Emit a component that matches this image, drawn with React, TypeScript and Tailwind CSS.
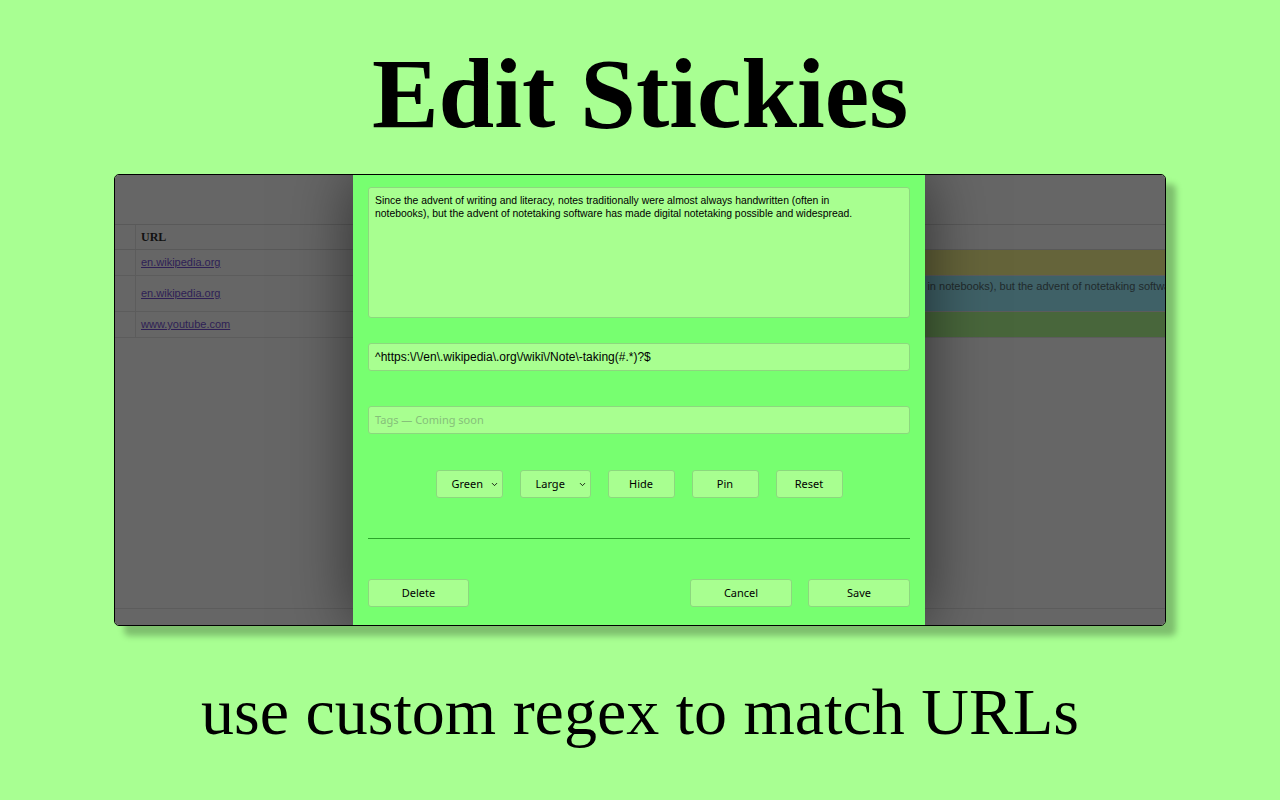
import { ChevronDown } from "lucide-react";

const NOTE =
  "Since the advent of writing and literacy, notes traditionally were almost always handwritten (often in notebooks), but the advent of notetaking software has made digital notetaking possible and widespread.";

const serif = "font-['Liberation_Serif',_'Times_New_Roman',_serif]";
const ui = "font-['Noto_Sans',_'Open_Sans',_sans-serif]";
const arial = "font-['Liberation_Sans',_Arial,_sans-serif]";

function Btn({ label, w = "w-[67px]" }: { label: string; w?: string }) {
  return (
    <button
      type="button"
      className={`${w} h-[28px] rounded-[3px] border border-[#8cd87e] bg-[#a8ff90] text-[11px] text-black ${ui}`}
    >
      {label}
    </button>
  );
}

function Sel({ label, w }: { label: string; w: string }) {
  return (
    <div
      className={`${w} flex h-[28px] items-center justify-between rounded-[3px] border border-[#8cd87e] bg-[#a8ff90] pl-[15px] pr-[3px] text-[11px] text-black ${ui}`}
    >
      <span>{label}</span>
      <ChevronDown className="size-[9px]" strokeWidth={2.25} />
    </div>
  );
}

function EditDialog() {
  return (
    <div className="absolute top-0 bottom-0 left-[238px] flex w-[572px] flex-col bg-[#77ff70] px-[15px] pt-[12px] shadow-[0_0_60px_rgba(0,0,0,0.55)]">
      <div
        className={`h-[131px] rounded-[3px] border border-[#8cd87e] bg-[#a8ff90] py-[6px] pr-[26px] pl-[6px] text-[10.4px] leading-[13px] text-black ${arial}`}
      >
        {NOTE}
      </div>

      <div
        className={`mt-[25px] flex h-[28px] items-center rounded-[3px] border border-[#8cd87e] bg-[#a8ff90] px-[6px] text-[12px] text-black ${arial}`}
      >
        {"^https:\\/\\/en\\.wikipedia\\.org\\/wiki\\/Note\\-taking(#.*)?$"}
      </div>

      <div
        className={`mt-[35px] flex h-[28px] items-center rounded-[3px] border border-[#8cd87e] bg-[#a8ff90] px-[6px] text-[11px] text-[#86c07a] ${ui}`}
      >
        Tags — Coming soon
      </div>

      <div className="mt-[36px] flex justify-center gap-[17px]">
        <Sel label="Green" w="w-[67px]" />
        <Sel label="Large" w="w-[71px]" />
        <Btn label="Hide" />
        <Btn label="Pin" />
        <Btn label="Reset" />
      </div>

      <div className="mt-[40px] h-px bg-[#2aa52a]" />

      <div className="mt-[40px] flex items-center">
        <Btn label="Delete" w="w-[101px]" />
        <div className="flex-1" />
        <Btn label="Cancel" w="w-[102px]" />
        <div className="w-[16px]" />
        <Btn label="Save" w="w-[102px]" />
      </div>
    </div>
  );
}

function BackgroundTable() {
  const rows = [
    { url: "en.wikipedia.org", h: "h-[26px]", cell: "bg-[#65643a]", text: "" },
    { url: "en.wikipedia.org", h: "h-[36px]", cell: "bg-[#3f6167]", text: NOTE },
    { url: "www.youtube.com", h: "h-[26px]", cell: "bg-[#48663b]", text: "" },
  ];
  return (
    <div className="flex h-full flex-col bg-[#666666]">
      <div className="h-[50px] border-b border-[#595959]" />
      <div className="grid h-[25px] grid-cols-[21px_326px_1fr] border-b border-[#595959]">
        <div className="border-r border-[#5c5c5c]" />
        <div className={`flex items-center px-[5px] text-[12px] font-bold text-[#111] ${serif}`}>URL</div>
        <div />
      </div>
      {rows.map((r, i) => (
        <div key={i} className={`grid ${r.h} grid-cols-[21px_325px_1fr] border-b border-[#5c5c5c]`}>
          <div className="border-r border-[#5c5c5c]" />
          <div className={`flex items-center px-[5px] text-[11px] ${arial}`}>
            <span className="text-[#2e1f55] underline">{r.url}</span>
          </div>
          <div
            className={`${r.cell} overflow-hidden pt-[4px] text-[11px] leading-[13px] text-[#1f2a2c] ${arial}`}
          >
            <div className="-ml-[6px] w-[1100px]">{r.text}</div>
          </div>
        </div>
      ))}
      <div className="flex-1 border-b border-[#5c5c5c]" />
      <div className="h-[16px]" />
    </div>
  );
}

export default function App() {
  return (
    <div className="flex h-[800px] w-[1280px] flex-col items-center overflow-hidden bg-[#a8ff92]">
      <h1 className={`mt-[39px] h-[110px] text-[100px] leading-[110px] font-bold text-black ${serif}`}>
        Edit Stickies
      </h1>

      <div className="relative mt-[25px] h-[452px] w-[1052px] overflow-hidden rounded-[5px] border border-black shadow-[10px_10px_6px_rgba(0,0,0,0.25)]">
        <BackgroundTable />
        <EditDialog />
      </div>

      <p className={`mt-[48px] h-[76px] text-[66px] leading-[76px] text-black ${serif}`}>
        use custom regex to match URLs
      </p>
    </div>
  );
}
